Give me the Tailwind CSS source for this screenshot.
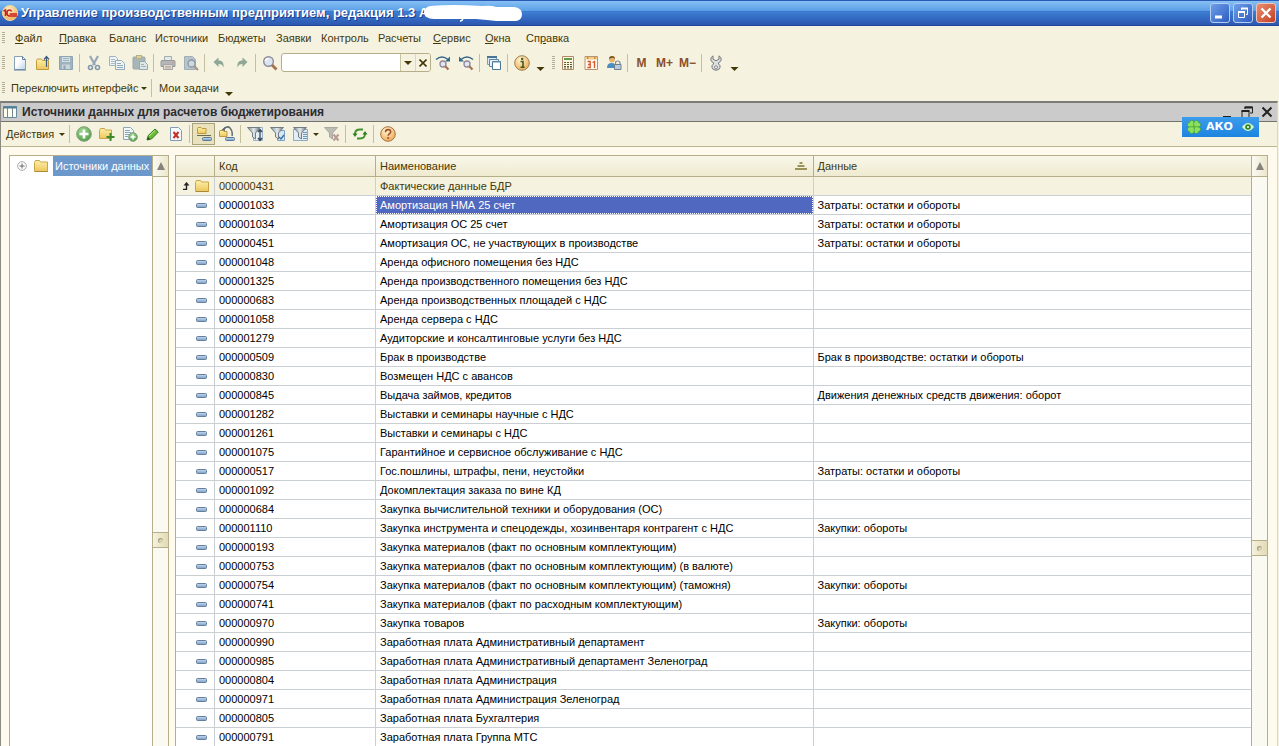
<!DOCTYPE html>
<html lang="ru">
<head>
<meta charset="utf-8">
<title>Управление производственным предприятием</title>
<script src="https://cdn.jsdelivr.net/npm/@tailwindcss/browser@4"></script>
</head>
<body class="h-screen overflow-hidden flex flex-col bg-[#f5f2df] text-[11px] leading-4 text-[#443808] font-['Liberation_Sans',sans-serif]">

<svg class="absolute size-0" aria-hidden="true">
  <defs>
    <linearGradient id="gFolder" x1="0" y1="0" x2="0" y2="1"><stop offset="0" stop-color="#fff0a8"/><stop offset="1" stop-color="#ecc75c"/></linearGradient>
    <linearGradient id="gPage" x1="0" y1="0" x2="1" y2="1"><stop offset=".4" stop-color="#fff"/><stop offset="1" stop-color="#b9d3ea"/></linearGradient>
    <radialGradient id="gOrange" cx=".4" cy=".3" r=".8"><stop offset="0" stop-color="#fff3d0"/><stop offset="1" stop-color="#eda44a"/></radialGradient>
    <radialGradient id="gGreen" cx=".4" cy=".3" r=".8"><stop offset="0" stop-color="#a4d892"/><stop offset="1" stop-color="#4a9a44"/></radialGradient>
    <linearGradient id="gDash" x1="0" y1="0" x2="0" y2="1"><stop offset="0" stop-color="#c8dcf0"/><stop offset="1" stop-color="#7c9cc0"/></linearGradient>
    <linearGradient id="gFunnel" x1="0" y1="0" x2="1" y2="0"><stop offset="0" stop-color="#7c8790"/><stop offset=".5" stop-color="#e4e9ec"/><stop offset="1" stop-color="#66727c"/></linearGradient>
  </defs>
  <symbol id="page" viewBox="0 0 16 16"><path d="M2.500 1.500h8l3 3v10h-11z" fill="url(#gPage)" stroke="#86a0b8"/><path d="M10.500 1.500v3h3M2 15h12" fill="none" stroke="#5f7f9c"/></symbol>
  <symbol id="open" viewBox="0 0 16 16"><path d="M1.500 5.500l1-1.500h4l1 1.500h6v9h-12z" fill="url(#gFolder)" stroke="#c09a3c"/><path d="M11.500 12V2M9 4.500l2.500-3 2.500 3" fill="none" stroke="#3c5c7c" stroke-width="1.200"/></symbol>
  <symbol id="save" viewBox="0 0 16 16"><path d="M1.500 1.500h13v13h-13z" fill="#9fb3bf" stroke="#8ea4b2"/><path d="M4 2h8v5H4z" fill="#d5dee2"/><path d="M5 3.500h6M5 5.500h6" stroke="#9fb3bf"/><path d="M4 9.500h8V14H4z" fill="#c9d5da"/><path d="M5.500 10.500h2V14h-2z" fill="#8ea4b2"/></symbol>
  <symbol id="cut" viewBox="0 0 16 16"><path d="M4 1l5 9M12 1l-5 9" stroke="#94a8b8" stroke-width="2.200"/><circle cx="4.500" cy="12.500" r="2" fill="none" stroke="#8299ad" stroke-width="1.600"/><circle cx="11.500" cy="12.500" r="2" fill="none" stroke="#8299ad" stroke-width="1.600"/></symbol>
  <symbol id="copy" viewBox="0 0 16 16"><path d="M.5 1.500h6l2 2v7h-8z" fill="#eef3f4" stroke="#9fb4c2"/><path d="M2 4.500h4M2 6.500h5M2 8.500h4" stroke="#a9bcc8"/><path d="M6.500 5.500h6l3 3v6h-9z" fill="#eef3f4" stroke="#93aabb"/><path d="M8 8.500h4M8 10.500h6M8 12.500h6" stroke="#93aabb"/></symbol>
  <symbol id="paste" viewBox="0 0 16 16"><rect x="1" y="2" width="12" height="12" rx="1" fill="#a9b6b8" stroke="#98a7ac"/><rect x="4.500" y=".5" width="5" height="3" fill="#dcd39c" stroke="#b8b084"/><path d="M7.500 6.500h5l3 3v5h-8z" fill="#dfe6e6" stroke="#93a8b6"/><path d="M9 9.500h3M9 11.500h5" stroke="#9db0bc"/></symbol>
  <symbol id="print" viewBox="0 0 16 16"><path d="M4.500 1.500h7V6h-7z" fill="#e6e8e4" stroke="#a2acb2"/><path d="M1 6.500q0-1 1-1h12q1 0 1 1v5H1z" fill="#b5b6b8" stroke="#97999c"/><path d="M3.500 9.500h9v5h-9z" fill="#e2ddd6" stroke="#a3a4a6"/><path d="M5 11.500h6M5 13h6" stroke="#b9a9a0"/><path d="M12 7.500h1.500" stroke="#d4906c"/></symbol>
  <symbol id="preview" viewBox="0 0 16 16"><path d="M1.500 1.500h8l3 3v10h-11z" fill="#b9c4ca" stroke="#a0afb8"/><circle cx="8.500" cy="8.500" r="3.500" fill="#ced9df" stroke="#8898a4" stroke-width="1.300"/><path d="M11 11l4 4" stroke="#a99589" stroke-width="2.200"/></symbol>
  <symbol id="undo" viewBox="0 0 16 16"><path d="M2.500 7L7.500 2.500v3c4 0 5.500 2.500 5 7-1-2.500-2-3.500-5-3.500v3z" fill="#8fa796"/></symbol>
  <symbol id="redo" viewBox="0 0 16 16"><path d="M13.500 7L8.500 2.500v3c-4 0-5.500 2.500-5 7 1-2.500 2-3.500 5-3.500v3z" fill="#8fa796"/></symbol>
  <symbol id="find" viewBox="0 0 16 16"><circle cx="6.500" cy="6.500" r="4.800" fill="#d9e6f2" stroke="#8e8a9c" stroke-width="1.400"/><path d="M3.500 6q.5-2.500 3-2.500" stroke="#fff" fill="none" stroke-width="1.400"/><path d="M10 10l4.500 4.500" stroke="#a5714f" stroke-width="2.800"/></symbol>
  <symbol id="findnext" viewBox="0 0 16 16"><path d="M1 4.500q6-5 12 0" fill="none" stroke="#35688a" stroke-width="1.600"/><path d="M15 1.500v5h-5z" fill="#35688a"/><circle cx="8" cy="9" r="3" fill="#dfe8f0" stroke="#91869a" stroke-width="1.300"/><path d="M10.200 11.200l3.300 3.300" stroke="#a5714f" stroke-width="2.200"/></symbol>
  <symbol id="findprev" viewBox="0 0 16 16"><path d="M15 4.500q-6-5-12 0" fill="none" stroke="#35688a" stroke-width="1.600"/><path d="M1 1.500v5h5z" fill="#35688a"/><circle cx="9" cy="9" r="3" fill="#dfe8f0" stroke="#91869a" stroke-width="1.300"/><path d="M11.200 11.200l3.300 3.300" stroke="#a5714f" stroke-width="2.200"/></symbol>
  <symbol id="windows" viewBox="0 0 16 16"><path d="M1.500 1.500h9v8h-9z" fill="#dbe8f3" stroke="#7d9db6"/><path d="M1 2h10" stroke="#4a7696" stroke-width="2"/><path d="M3.500 4.500h9v7h-9z" fill="#e6eff7" stroke="#5f86a4"/><path d="M6.500 6.500h8v8h-8z" fill="#fff" stroke="#4a7696"/><path d="M6 7h9" stroke="#6b93b2"/></symbol>
  <symbol id="info" viewBox="0 0 16 16"><circle cx="8" cy="8" r="7.300" fill="url(#gOrange)" stroke="#9a8254"/><path d="M6.500 6.500H9v5.500M6.500 12.300h4" stroke="#3f5a1c" stroke-width="1.600" fill="none"/><circle cx="8.200" cy="3.900" r="1.200" fill="#3f5a1c"/></symbol>
  <symbol id="help" viewBox="0 0 16 16"><circle cx="8" cy="8" r="7.300" fill="url(#gOrange)" stroke="#a87440"/><path d="M5.500 6.200q0-2.600 2.600-2.600t2.500 2.300c0 1.600-2.400 1.900-2.400 3.900" stroke="#a0522a" stroke-width="1.600" fill="none"/><circle cx="8.200" cy="12" r="1.100" fill="#a0522a"/></symbol>
  <symbol id="calc" viewBox="0 0 16 16"><path d="M2.500 1.500h11v13h-11z" fill="#fdf6df" stroke="#b08a68"/><path d="M4 3h8v2H4z" fill="#5d9a4c"/><path d="M4 7.500h8M4 9.500h8M4 11.500h8M4 13h8" stroke="#5c5a38" stroke-dasharray="2 1"/></symbol>
  <symbol id="cal" viewBox="0 0 16 16"><path d="M2 1.500h12.500v13H2z" fill="#fffaf0" stroke="#b89268"/><path d="M2.500 2h11.500v2.500H2.500z" fill="#f3cd88"/><path d="M4 3h1.500M11 3h1.500" stroke="#8f5a28"/><path d="M4.500 6.500h2.700v6H4.300M5 9.500h2M9.500 7.500l2-1v6.500" stroke="#d6552a" stroke-width="1.300" fill="none"/></symbol>
  <symbol id="user" viewBox="0 0 16 16"><circle cx="6" cy="4.500" r="3" fill="#e7b46e"/><path d="M3 4q0-3 3-3t3 3q-2-1.500-3-1.200T3 4z" fill="#75501f"/><path d="M1 13q0-5 4.500-5T10 13z" fill="#4a8fc2"/><path d="M9.500 9.500V8q0-2 2.250-2T14 8v1.500" fill="none" stroke="#7a8ca0" stroke-width="1.200"/><path d="M8.500 9.500h6.500v5H8.500z" fill="#bccbdc" stroke="#6d8094"/></symbol>
  <symbol id="wrench" viewBox="0 0 16 16"><path d="M5 .8Q2 2.500 3 5.500q.5 1.500 2.500 2.200v1.300q-2 1-1.500 3.500.5 2.700 4 2.700t4-2.700q.5-2.500-1.500-3.500V7.700q2-.7 2.500-2.200 1-3-2-4.700v3.400L8 5.800 5 4.200zM8 10.800a1.500 1.500 0 1 0 .01 0z" fill="#dedfe0" stroke="#77797c" fill-rule="evenodd"/></symbol>
  <symbol id="add" viewBox="0 0 16 16"><circle cx="8" cy="8" r="7.300" fill="url(#gGreen)" stroke="#7f9d78"/><path d="M8 3.500v9M3.500 8h9" stroke="#fff" stroke-width="2.600"/></symbol>
  <symbol id="folder" viewBox="0 0 16 16"><path d="M1.500 4.500l1-2h4l1 1.500h7v9.500h-13z" fill="url(#gFolder)" stroke="#c9a54a"/><path d="M2 13.500h12.500" stroke="#a98a3a"/></symbol>
  <symbol id="folderadd" viewBox="0 0 16 16"><path d="M.5 4.500l1-2h4l1 1.500h6v8.500H.5z" fill="url(#gFolder)" stroke="#c9a54a"/><path d="M11.500 7v8M7.500 11h8" stroke="#3c8a2c" stroke-width="2"/></symbol>
  <symbol id="pageadd" viewBox="0 0 16 16"><path d="M1.500 1.500h7l3 3v9h-10z" fill="#f2f7fa" stroke="#8ba5b8"/><path d="M3 4.500h5M3 6.500h6M3 8.500h5M3 10.500h3" stroke="#8ba5b8"/><circle cx="11" cy="11" r="4.300" fill="url(#gGreen)" stroke="#7f9d78"/><path d="M11 8.500v5M8.500 11h5" stroke="#fff" stroke-width="1.500"/></symbol>
  <symbol id="pencil" viewBox="0 0 16 16"><path d="M2 14l1.200-4.500L10 3l3.300 3-6.800 7z" fill="#6bbb35" stroke="#2f7d1e"/><path d="M4 10l6-5.500" stroke="#c4ec92"/><path d="M2 14l1-3 2 2z" fill="#24401c"/></symbol>
  <symbol id="del" viewBox="0 0 16 16"><path d="M2.500 1.500h8l3 3v10h-11z" fill="#f6fafd" stroke="#829cb4"/><path d="M5.500 6l5 6M10.500 6l-5 6" stroke="#c22f26" stroke-width="2"/></symbol>
  <symbol id="hier" viewBox="0 0 16 16"><path d="M1.500 2.500l.5-1h3l1 1h4v5h-8.500z" fill="url(#gFolder)" stroke="#c09a3c"/><path d="M1 9.500h14" stroke="#6c6a4c"/><rect x="6.500" y="11.500" width="9" height="3" rx="1" fill="url(#gDash)" stroke="#56789a"/></symbol>
  <symbol id="hier2" viewBox="0 0 16 16"><path d="M.5 5.500l.5-1h3l1 1h3v5H.5z" fill="url(#gFolder)" stroke="#c09a3c"/><path d="M4 4Q8-1 11 2t2 8" fill="none" stroke="#5f6a70" stroke-width="1.500"/><path d="M6 1v4L2.500 4z" fill="#5f6a70"/><rect x="6.500" y="11.500" width="9" height="3" rx="1" fill="url(#gDash)" stroke="#56789a"/></symbol>
  <symbol id="filter1" viewBox="0 0 16 16"><path d="M6.500 1.500h9v13h-9z" fill="#e6eff6" stroke="#9ab2c6"/><path d="M.5 1.500h12.500L8.500 7v6l-3-2V7z" fill="url(#gFunnel)" stroke="#737e88"/><path d="M13 4v10M11 6l2-2.500L15 6M11 12l2 2.500 2-2.500" fill="none" stroke="#35485a" stroke-width="1.300"/></symbol>
  <symbol id="filter2" viewBox="0 0 16 16"><path d="M7.500 4.500h7v10h-7z" fill="#d7e7f5" stroke="#7aa2c4"/><path d="M9 11l2 2 3-4" stroke="#3872a8" fill="none" stroke-width="1.400"/><path d="M.5 1.500h13L8.500 7v6l-3-2V7z" fill="url(#gFunnel)" stroke="#737e88"/></symbol>
  <symbol id="filter3" viewBox="0 0 16 16"><path d="M.5 3.500h14v11H.5z" fill="#e2edf6" stroke="#8eabc2"/><path d="M10 6.500h4M10 8.500h4M10 10.500h4M10 12.500h4" stroke="#6e96b8"/><path d="M.5 1.500h13L8.500 7v6l-3-2V7z" fill="url(#gFunnel)" stroke="#737e88"/></symbol>
  <symbol id="filterx" viewBox="0 0 16 16"><path d="M.5 1.500h13L8.500 7v6l-3-2V7z" fill="#bcbcb4" stroke="#a9a9a2"/><path d="M9.500 8.500l5 6M14.500 8.500l-5 6" stroke="#b99a90" stroke-width="2"/></symbol>
  <symbol id="refresh" viewBox="0 0 16 16"><path d="M3 8q0-4.500 5-4.500h3M13 8q0 4.500-5 4.500H5" fill="none" stroke="#3f9130" stroke-width="1.800"/><path d="M.5 7.500h5L3 11zM10.500 8.500h5L13 5z" fill="#2f7d22"/></symbol>
  <symbol id="dash" viewBox="0 0 12 5"><rect x=".5" y=".5" width="10" height="4" rx="1" fill="url(#gDash)" stroke="#63809f"/></symbol>
  <symbol id="dd" viewBox="0 0 8 4"><path d="M0 0h8L4 4z" fill="#443808"/></symbol>
</svg>

<!-- Application title bar -->
<header class="relative h-[26px] shrink-0 flex items-center pl-[2px] pr-[3px] bg-linear-to-b from-[#2a58b4] via-[#3c7cd2] to-[#2c56b0] from-0% via-50% to-100% border-b border-[#24479c]">
  <div class="absolute inset-x-0 top-px h-[10px] bg-linear-to-b from-[#86c0f4] to-[#5a9ee6]"></div>
  <svg class="relative size-4 mr-[3px]" viewBox="0 0 16 16" aria-hidden="true"><circle cx="8" cy="8" r="7.500" fill="url(#gOrange)" stroke="#f6dd9a"/><path d="M1.500 6L3.500 5v6M9.500 6.500q-.5-1.500-2-1.500Q5 5 5 8t2.500 3H15M7.500 9H15" stroke="#c8201c" stroke-width="1.500" fill="none"/></svg>
  <h1 class="relative font-bold text-[13px] text-white whitespace-nowrap [text-shadow:1px_1px_0_#1c3c88]">Управление производственным предприятием, редакция 1.3 А</h1>
  <svg class="absolute left-[422px] top-[3px] w-[102px] h-5" viewBox="0 0 102 20" aria-hidden="true"><path d="M38 18q3 0 3-4" stroke="#fff" stroke-width="1.500" fill="none"/><path d="M8 3Q30 1 60 3q10-1 14 1h18q8 1 8 7t-6 7H74q-8-1-20-2H12Q2 16 2 9q1-5 6-6z" fill="#fff"/></svg>
  <div class="relative ml-auto flex gap-[3px]">
    <button aria-label="Свернуть" class="size-5 rounded-[3px] border border-[#b4cdf2] bg-linear-to-br from-[#6f9fe8] to-[#2e5cc0]"><svg viewBox="0 0 18 18"><path d="M4 13h7" stroke="#fff" stroke-width="3"/></svg></button>
    <button aria-label="Восстановить" class="size-5 rounded-[3px] border border-[#b4cdf2] bg-linear-to-br from-[#6f9fe8] to-[#2e5cc0]"><svg viewBox="0 0 18 18" fill="none" stroke="#fff"><path d="M4.500 8v5.500h6V8M7.500 6V4.500h6v6H12"/><path d="M4 8h7M7 4.500h7" stroke-width="2"/></svg></button>
    <button aria-label="Закрыть" class="size-5 rounded-[3px] border border-[#f0c4b8] bg-linear-to-br from-[#e88e72] to-[#c43c1c]"><svg viewBox="0 0 18 18"><path d="M4.500 4.500l9 9M13.500 4.500l-9 9" stroke="#fff" stroke-width="2.400"/></svg></button>
  </div>
</header>

<!-- Menu -->
<nav class="h-6 shrink-0 flex items-center pl-[2px] text-left [&>button]:text-left [&>button]:whitespace-nowrap">
  <i class="w-[3px] h-3 mr-[10px] bg-[repeating-linear-gradient(#b5b095_0_1px,transparent_1px_2px)]"></i>
  <button class="w-11"><u>Ф</u>айл</button><button class="w-[50px]"><u>П</u>равка</button><button class="w-[46px]">Баланс</button><button class="w-[63px]">Источники</button><button class="w-[58px]">Бюджеты</button><button class="w-[45px]">Заявки</button><button class="w-[57px]">Контроль</button><button class="w-[55px]">Расчеты</button><button class="w-[52px]"><u>С</u>ервис</button><button class="w-[41px]"><u>О</u>кна</button><button>Сп<u>р</u>авка</button>
</nav>

<!-- Main toolbar -->
<div class="h-[25px] shrink-0 flex items-center pl-[2px] [&>button]:w-[23px] [&>button]:h-5 [&>button]:flex [&>button]:items-center [&>button]:justify-center [&>b]:w-px [&>b]:h-[18px] [&>b]:mx-[2px] [&>b]:bg-[#c5bf9c] [&_svg]:shrink-0">
  <i class="w-[3px] h-3.5 mr-[3px] bg-[repeating-linear-gradient(#b5b095_0_1px,transparent_1px_2px)]"></i>
  <button aria-label="Новый"><svg class="size-4"><use href="#page"/></svg></button>
  <button aria-label="Открыть"><svg class="size-4"><use href="#open"/></svg></button>
  <button aria-label="Сохранить"><svg class="size-4"><use href="#save"/></svg></button><b></b>
  <button aria-label="Вырезать"><svg class="size-4"><use href="#cut"/></svg></button>
  <button aria-label="Копировать"><svg class="size-4"><use href="#copy"/></svg></button>
  <button aria-label="Вставить"><svg class="size-4"><use href="#paste"/></svg></button><b></b>
  <button aria-label="Печать"><svg class="size-4"><use href="#print"/></svg></button>
  <button aria-label="Просмотр"><svg class="size-4"><use href="#preview"/></svg></button><b></b>
  <button aria-label="Отменить"><svg class="size-4"><use href="#undo"/></svg></button>
  <button aria-label="Вернуть"><svg class="size-4"><use href="#redo"/></svg></button><b></b>
  <button aria-label="Найти"><svg class="size-4"><use href="#find"/></svg></button>
  <div class="w-[150px] h-[19px] flex border border-[#b5ae88] rounded-[3px] bg-white overflow-hidden">
    <input aria-label="Поиск" class="flex-1 min-w-0 px-1 outline-none">
    <button aria-label="Список" class="w-[15px] flex items-center justify-center border-l border-[#c9c4a0] bg-[#f5f2df]"><svg class="w-2 h-1"><use href="#dd"/></svg></button>
    <button aria-label="Очистить" class="w-[15px] flex items-center justify-center border-l border-[#dcd8bc] bg-[#f5f2df]"><svg class="size-2" viewBox="0 0 8 8"><path d="M.5.5l7 7M7.500.5l-7 7" stroke="#443808" stroke-width="1.600"/></svg></button>
  </div>
  <button aria-label="Найти далее"><svg class="size-4"><use href="#findnext"/></svg></button>
  <button aria-label="Найти ранее"><svg class="size-4"><use href="#findprev"/></svg></button><b></b>
  <button aria-label="Окна"><svg class="size-4"><use href="#windows"/></svg></button><b></b>
  <button aria-label="Справка"><svg class="size-4"><use href="#info"/></svg></button>
  <svg class="w-[15px] h-1 mt-3"><use href="#dd"/></svg>
  <i class="w-[3px] h-3.5 ml-1 mr-px bg-[repeating-linear-gradient(#b5b095_0_1px,transparent_1px_2px)]"></i>
  <button aria-label="Калькулятор"><svg class="size-4"><use href="#calc"/></svg></button>
  <button aria-label="Календарь"><svg class="size-4"><use href="#cal"/></svg></button>
  <button aria-label="Пользователь"><svg class="size-4"><use href="#user"/></svg></button><b></b>
  <button class="font-bold text-[12px] text-[#8a4f2c]">M</button>
  <button class="font-bold text-[12px] text-[#8a4f2c]">M+</button>
  <button class="font-bold text-[12px] text-[#8a4f2c]">M−</button><b></b>
  <button aria-label="Сервис"><svg class="size-4"><use href="#wrench"/></svg></button>
  <svg class="w-[15px] h-1 mt-3"><use href="#dd"/></svg>
</div>

<!-- Interface toolbar -->
<div class="h-[26px] shrink-0 flex items-center pl-[2px] whitespace-nowrap">
  <i class="w-[3px] h-3 mr-[6px] bg-[repeating-linear-gradient(#b5b095_0_1px,transparent_1px_2px)]"></i>
  <button class="flex items-center w-[140px]"><span class="w-[130px] text-left">Переключить интерфейс</span><svg class="w-1.5 h-[3px]" viewBox="0 0 8 4"><path d="M0 0h8L4 4z" fill="#443808"/></svg></button>
  <b class="w-px h-[18px] bg-[#c5bf9c]"></b>
  <button class="w-[66px] text-left ml-[7px]">Мои задачи</button>
  <svg class="w-2 h-1 mt-3"><use href="#dd"/></svg>
</div>

<!-- Document window -->
<main class="flex-1 min-h-0 flex flex-col mr-px border-t-2 border-l border-r border-t-[#7c7c78] border-l-[#8c8c84] border-r-[#d8d8d0] bg-[#fefbee]">
  <div class="h-[19px] shrink-0 flex items-center pl-[2px] pr-1 bg-[#cbcbcb] border-b border-[#74746c]">
    <svg class="w-3.5 h-3.5 mr-[5px]" viewBox="0 0 14 14" aria-hidden="true"><path d="M.5 1.500h13v11H.5z" fill="#fffdf0" stroke="#6a8a9c"/><path d="M0 2.500h14" stroke="#4c8094" stroke-width="2"/><path d="M4.500 3v10M9.500 3v10" stroke="#6a8a9c"/></svg>
    <h2 class="font-bold text-[12px] text-[#2c2c30] whitespace-nowrap">Источники данных для расчетов бюджетирования</h2>
    <div class="ml-auto flex items-center gap-2">
      <button aria-label="Свернуть окно"><svg class="size-3" viewBox="0 0 12 12"><path d="M2 11h8" stroke="#222" stroke-width="2"/></svg></button>
      <button aria-label="Восстановить окно"><svg class="size-3" viewBox="0 0 12 12" fill="none" stroke="#222"><path d="M1 5v6.500h7V5M4 3V1h7.500v6H9"/><path d="M.5 5h8M3.500 1.500h8" stroke-width="1.800"/></svg></button>
      <button aria-label="Закрыть окно"><svg class="size-3" viewBox="0 0 12 12"><path d="M1.500 1.500l9 9M10.500 1.500l-9 9" stroke="#222" stroke-width="2"/></svg></button>
    </div>
  </div>

  <div class="relative h-[25px] shrink-0 flex items-center bg-[#f5f2df] border-b border-[#bdb78e] [&>button]:w-[23px] [&>button]:h-[22px] [&>button]:flex [&>button]:items-center [&>button]:justify-center [&>b]:w-px [&>b]:h-[18px] [&>b]:mx-[2px] [&>b]:bg-[#c5bf9c] [&_svg]:shrink-0">
    <div class="w-[66px] pl-[5px]"><button class="flex items-center"><span class="w-[53px] text-left">Действия</span><svg class="w-1.5 h-[3px]" viewBox="0 0 8 4"><path d="M0 0h8L4 4z" fill="#443808"/></svg></button></div><b></b>
    <button aria-label="Добавить"><svg class="size-4"><use href="#add"/></svg></button>
    <button aria-label="Новая группа"><svg class="size-4"><use href="#folderadd"/></svg></button>
    <button aria-label="Добавить копированием"><svg class="size-4"><use href="#pageadd"/></svg></button>
    <button aria-label="Изменить"><svg class="size-4"><use href="#pencil"/></svg></button>
    <button aria-label="Пометить на удаление"><svg class="size-4"><use href="#del"/></svg></button><b></b>
    <button aria-label="Иерархический просмотр" aria-pressed="true" class="bg-[#e9e2be] border border-[#a9a27c]"><svg class="size-4"><use href="#hier"/></svg></button>
    <button aria-label="Переместить в группу"><svg class="size-4"><use href="#hier2"/></svg></button><b></b>
    <button aria-label="Отбор и сортировка"><svg class="size-4"><use href="#filter1"/></svg></button>
    <button aria-label="Отбор по значению"><svg class="size-4"><use href="#filter2"/></svg></button>
    <button aria-label="История отборов"><svg class="size-4"><use href="#filter3"/></svg></button>
    <svg class="w-2 h-[3px]" viewBox="0 0 8 4"><path d="M0 0h8L4 4z" fill="#443808"/></svg>
    <button aria-label="Отключить отбор"><svg class="size-4"><use href="#filterx"/></svg></button><b></b>
    <button aria-label="Обновить"><svg class="size-4"><use href="#refresh"/></svg></button><b></b>
    <button aria-label="Помощь"><svg class="size-4"><use href="#help"/></svg></button>
    <!-- Floating badge -->
    <div class="absolute right-[18px] -top-[5px] w-[77px] h-5 flex items-center px-1 bg-linear-to-b from-[#3c9cec] to-[#1c84e0] text-white font-bold text-[11px] font-['DejaVu_Sans',sans-serif]">
      <svg class="size-4" viewBox="0 0 16 16"><g fill="#8ce060" stroke="#3c9a2c" stroke-width=".6"><path d="M8 8Q1 9 1.500 5.500q0-2 2-2 0-2 2-2Q9 1 8 8z"/><path d="M8 8q-1-7 2.500-6.500 2 0 2 2 2 0 2 2Q15 9 8 8z"/><path d="M8 8q7-1 6.500 2.500 0 2-2 2 0 2-2 2Q7 15 8 8z"/><path d="M8 8q1 7-2.500 6.500-2 0-2-2-2 0-2-2Q1 7 8 8z"/></g></svg>
      <span class="ml-1">АКО</span>
      <svg class="w-3 h-2 ml-auto mr-px" viewBox="0 0 12 8"><path d="M0 4q6-8 12 0-6 8-12 0z" fill="#d8f4d0"/><circle cx="6" cy="4" r="2.800" fill="#2a8a2a"/><circle cx="6" cy="4" r="1" fill="#fff"/></svg>
    </div>
  </div>

  <div class="flex-1 min-h-0 flex gap-1.5 pt-2 pl-2 pr-[9px]">
    <!-- Group tree -->
    <aside class="w-[160px] shrink-0 flex bg-white border border-b-0 border-[#b5ae88]">
      <div class="flex-1 min-w-0 flex items-start overflow-hidden whitespace-nowrap">
        <svg class="size-2.5 shrink-0 mt-[5px] ml-[7px] mr-[6px]" viewBox="0 0 10 10"><circle cx="5" cy="5" r="4.300" fill="#fff" stroke="#aaa"/><path d="M5 2.500v5M2.500 5h5" stroke="#666"/></svg>
        <svg class="size-4 shrink-0 mt-[2px] mr-1"><use href="#folder"/></svg>
        <span class="flex-1 h-5 pl-[2px] leading-5 bg-[#6d98cc] text-white">Источники данных</span>
      </div>
      <div class="w-4 shrink-0 flex flex-col border-l border-[#b5ae88] bg-[#faf9f2]">
        <button aria-label="Вверх" class="h-[21px] shrink-0 flex items-center justify-center border-b border-[#b5ae88] bg-linear-to-r from-[#fbfaf2] to-[#ece7cc]"><svg class="w-2 h-2" viewBox="0 0 8 8"><path d="M4 0l4 8H0z" fill="#85837a"/></svg></button>
        <div class="grow-[355]"></div>
        <div class="h-4 shrink-0 flex items-center justify-center border-y border-[#b5ae88] bg-linear-to-r from-[#f5f2df] to-[#e2dbb4]"><i class="size-[5px] rounded-full border-t border-l border-[#a39d7c] bg-[#d9d3b4]"></i></div>
        <div class="grow-[198]"></div>
      </div>
    </aside>

    <!-- Item list -->
    <section class="flex-1 min-w-0 flex bg-white border border-b-0 border-[#b5ae88]">
      <div class="flex-1 min-w-0 overflow-hidden">
        <table class="w-full table-fixed border-separate border-spacing-0 whitespace-nowrap text-left">
          <colgroup><col class="w-[39px]"><col class="w-[161px]"><col><col></colgroup>
          <thead>
            <tr class="h-[21px] [&>th]:font-normal [&>th]:p-0 [&>th]:pl-1 [&>th]:border-b [&>th]:border-r [&>th]:border-[#b5ae88] [&>th]:bg-linear-to-b [&>th]:from-[#f9f7ea] [&>th]:to-[#efead0]">
              <th aria-label="Вид"></th><th>Код</th>
              <th><div class="flex items-center justify-between pr-1.5">Наименование<svg class="w-3 h-2" viewBox="0 0 12 8"><path d="M4.500 1h3M2.500 4h7M0 7h12" stroke="#9a945c" stroke-width="2"/></svg></div></th>
              <th class="border-r-0!">Данные</th>
            </tr>
          </thead>
          <tbody id="rows"></tbody>
        </table>
      </div>
      <div class="w-4 shrink-0 flex flex-col border-l border-[#b5ae88] bg-[#faf9f2]">
        <button aria-label="Вверх" class="h-[21px] shrink-0 flex items-center justify-center border-b border-[#b5ae88] bg-linear-to-r from-[#fbfaf2] to-[#ece7cc]"><svg class="w-2 h-2" viewBox="0 0 8 8"><path d="M4 0l4 8H0z" fill="#85837a"/></svg></button>
        <div class="grow-[363]"></div>
        <div class="h-4 shrink-0 flex items-center justify-center border-y border-[#b5ae88] bg-linear-to-r from-[#f5f2df] to-[#e2dbb4]"><i class="size-[5px] rounded-full border-t border-l border-[#a39d7c] bg-[#d9d3b4]"></i></div>
        <div class="grow-[190]"></div>
      </div>
    </section>
  </div>
</main>

<script>
const cost = "Затраты: остатки и обороты", buy = "Закупки: обороты";
const items = [
  ["000000431", "Фактические данные БДР", ""],
  ["000001033", "Амортизация НМА 25 счет", cost],
  ["000001034", "Амортизация ОС 25 счет", cost],
  ["000000451", "Амортизация ОС, не участвующих в производстве", cost],
  ["000001048", "Аренда офисного помещения без НДС", ""],
  ["000001325", "Аренда производственного помещения без НДС", ""],
  ["000000683", "Аренда производственных площадей с НДС", ""],
  ["000001058", "Аренда сервера с НДС", ""],
  ["000001279", "Аудиторские и консалтинговые услуги без НДС", ""],
  ["000000509", "Брак в производстве", "Брак в производстве: остатки и обороты"],
  ["000000830", "Возмещен НДС с авансов", ""],
  ["000000845", "Выдача займов, кредитов", "Движения денежных средств движения: оборот"],
  ["000001282", "Выставки и семинары научные с НДС", ""],
  ["000001261", "Выставки и семинары с НДС", ""],
  ["000001075", "Гарантийное и сервисное обслуживание с НДС", ""],
  ["000000517", "Гос.пошлины, штрафы, пени, неустойки", cost],
  ["000001092", "Докомплектация заказа по вине КД", ""],
  ["000000684", "Закупка вычислительной техники и оборудования (ОС)", ""],
  ["000001110", "Закупка инструмента и спецодежды, хозинвентаря контрагент с НДС", buy],
  ["000000193", "Закупка материалов (факт по основным комплектующим)", ""],
  ["000000753", "Закупка материалов (факт по основным комплектующим) (в валюте)", ""],
  ["000000754", "Закупка материалов (факт по основным комплектующим) (таможня)", buy],
  ["000000741", "Закупка материалов (факт по расходным комплектующим)", ""],
  ["000000970", "Закупка товаров", buy],
  ["000000990", "Заработная плата Административный департамент", ""],
  ["000000985", "Заработная плата Административный департамент Зеленоград", ""],
  ["000000804", "Заработная плата Администрация", ""],
  ["000000971", "Заработная плата Администрация Зеленоград", ""],
  ["000000805", "Заработная плата Бухгалтерия", ""],
  ["000000791", "Заработная плата Группа МТС", ""],
];
const folderIcon = `<div class="flex items-center gap-1 pl-1.5"><svg class="size-2" viewBox="0 0 8 8"><path d="M1 7.500h3.500V2" fill="none" stroke="#222" stroke-width="1.400"/><path d="M1.500 3.500L4.500 0l3 3.500z" fill="#222"/></svg><svg class="size-4"><use href="#folder"/></svg></div>`;
const itemIcon = `<svg class="w-3 h-[5px] ml-5"><use href="#dash"/></svg>`;
const cell = "p-0 pl-1 border-b border-r border-[#c9cfd2]";
document.getElementById("rows").innerHTML = items.map(([code, name, data], i) => `
  <tr class="${i ? "h-[19px] text-black" : "h-[19px] bg-[#f5f2df]"}">
    <td class="p-0 border-b border-r border-[#c9cfd2]">${i ? itemIcon : folderIcon}</td>
    <td class="${cell}">${code}</td>
    <td class="${i === 1 ? "p-0 border-b border-r border-[#c9cfd2]" : cell}">${i === 1 ? `<div class="h-[18px] pl-[3px] border border-dotted border-white bg-[#5068c0] text-white">${name}</div>` : name}</td>
    <td class="p-0 pl-1 border-b border-[#c9cfd2]">${data}</td>
  </tr>`).join("");
</script>
</body>
</html>
